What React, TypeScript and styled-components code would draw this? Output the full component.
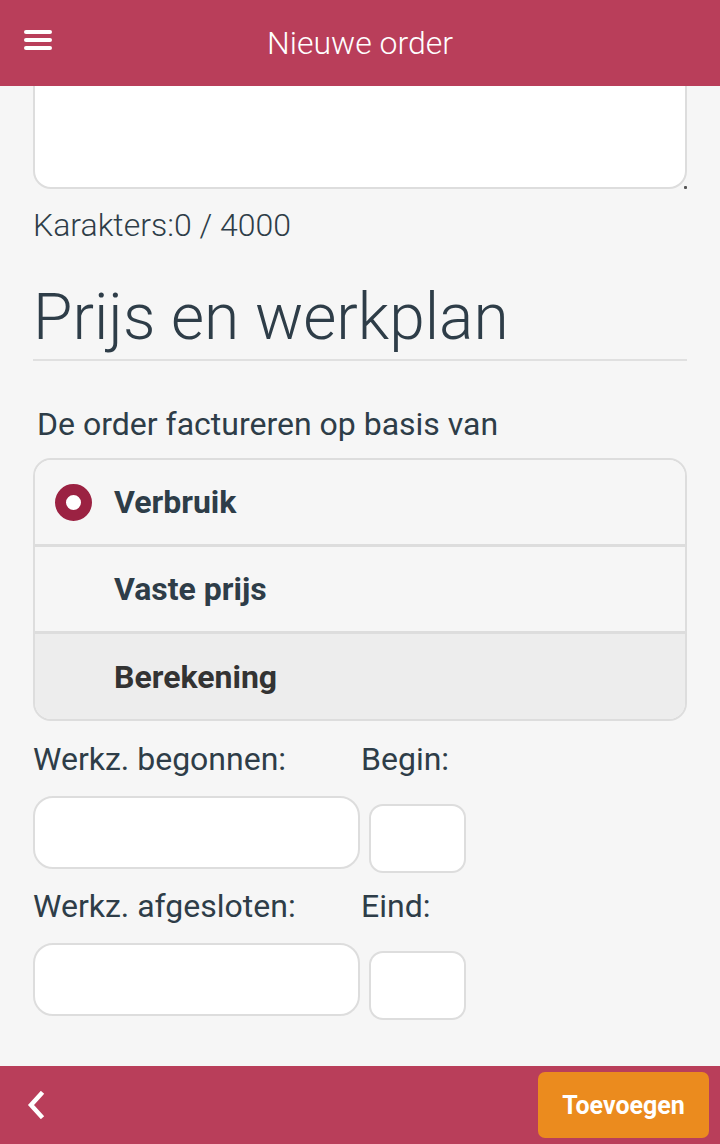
import styled, { createGlobalStyle } from "styled-components";

const GlobalStyle = createGlobalStyle`
  html, body {
    margin: 0;
    padding: 0;
    background: #f6f6f6;
    font-family: Roboto, "Liberation Sans", sans-serif;
  }
  * { box-sizing: border-box; }
`;

const options = [
  { label: "Verbruik", checked: true },
  { label: "Vaste prijs", checked: false },
  { label: "Berekening", checked: false, shaded: true },
];

const timeFields = [
  { date: "Werkz. begonnen:", time: "Begin:" },
  { date: "Werkz. afgesloten:", time: "Eind:" },
];

export default function App() {
  return (
    <Page>
      <GlobalStyle />
      <Header>
        <MenuButton aria-label="menu">
          <svg width="28" height="20" viewBox="0 0 28 20">
            <rect x="0" y="0" width="28" height="4" rx="2" fill="#fff" />
            <rect x="0" y="8" width="28" height="4" rx="2" fill="#fff" />
            <rect x="0" y="16" width="28" height="4" rx="2" fill="#fff" />
          </svg>
        </MenuButton>
        <Title>Nieuwe order</Title>
      </Header>

      <Main>
        <TextArea>
          <ResizeGrip />
        </TextArea>
        <Counter>Karakters:0 / 4000</Counter>

        <SectionTitle>Prijs en werkplan</SectionTitle>

        <Question>De order factureren op basis van</Question>
        <RadioGroup>
          {options.map((o) => (
            <RadioRow key={o.label} $shaded={o.shaded}>
              <RadioSlot>{o.checked && <RadioDot />}</RadioSlot>
              <RadioLabel $dark={o.shaded}>{o.label}</RadioLabel>
            </RadioRow>
          ))}
        </RadioGroup>

        {timeFields.map((f) => (
          <FieldBlock key={f.date}>
            <LabelRow>
              <DateLabel>{f.date}</DateLabel>
              <FieldLabel>{f.time}</FieldLabel>
            </LabelRow>
            <InputRow>
              <DateInput />
              <TimeInput />
            </InputRow>
          </FieldBlock>
        ))}
      </Main>

      <Footer>
        <BackButton aria-label="terug">
          <svg width="20" height="28" viewBox="0 0 20 28">
            <path
              d="M15 3 L5 14 L15 25"
              stroke="#fff"
              strokeWidth="4.5"
              fill="none"
              strokeLinecap="square"
              strokeLinejoin="miter"
            />
          </svg>
        </BackButton>
        <AddButton>Toevoegen</AddButton>
      </Footer>
    </Page>
  );
}

const Page = styled.div`
  display: flex;
  flex-direction: column;
  height: 100vh;
  overflow: hidden;
  background: #f6f6f6;
  color: #2e3d48;
`;

const Header = styled.header`
  flex: none;
  height: 86px;
  background: #b93e5a;
  display: flex;
  align-items: center;
  justify-content: center;
  position: relative;
  z-index: 1;
`;

const MenuButton = styled.div`
  position: absolute;
  left: 24px;
  top: 30px;
  display: flex;
`;

const Title = styled.h1`
  margin: 0;
  color: #fff;
  font-size: 32px;
  font-weight: 300;
`;

const Main = styled.main`
  flex: 1;
  overflow: hidden;
  padding: 0 33px;
  display: flex;
  flex-direction: column;
`;

const TextArea = styled.div`
  flex: none;
  position: relative;
  margin-top: -20px;
  height: 123px;
  background: #fff;
  border: 2px solid #dddddd;
  border-radius: 18px;
`;

const ResizeGrip = styled.div`
  position: absolute;
  right: -2px;
  bottom: -2px;
  width: 3px;
  height: 3px;
  background: #555;
  border-radius: 1px;
`;

const Counter = styled.div`
  margin-top: 17px;
  font-size: 32px;
  font-weight: 300;
  line-height: 38px;
`;

const SectionTitle = styled.h2`
  margin: 37px 0 0;
  padding-bottom: 4px;
  font-size: 64px;
  font-weight: 300;
  line-height: 74px;
  border-bottom: 2px solid #e0e0e0;
`;

const Question = styled.div`
  margin: 44px 0 0 4px;
  font-size: 32px;
  line-height: 38px;
`;

const RadioGroup = styled.div`
  margin-top: 15px;
  border: 2px solid #dddddd;
  border-radius: 18px;
  overflow: hidden;
  background: #f6f6f6;
`;

const RadioRow = styled.div<{ $shaded?: boolean }>`
  height: 84px;
  display: flex;
  align-items: center;
  background: ${(p) => (p.$shaded ? "#ededed" : "#f6f6f6")};
  & + & {
    height: 87px;
    border-top: 3px solid #dddddd;
  }
  &:last-child {
    height: 88px;
  }
`;

const RadioSlot = styled.div`
  width: 79px;
  padding-left: 20px;
  display: flex;
  align-items: center;
`;

const RadioDot = styled.div`
  width: 37px;
  height: 37px;
  border-radius: 50%;
  border: 11px solid #9b2242;
  background: #fff;
`;

const RadioLabel = styled.span<{ $dark?: boolean }>`
  font-size: 32px;
  font-weight: 700;
  color: ${(p) => (p.$dark ? "#333333" : "#2e3d48")};
`;

const FieldBlock = styled.div`
  display: flex;
  flex-direction: column;
  margin-top: 19px;
  & + & {
    margin-top: 14px;
  }
`;

const LabelRow = styled.div`
  display: flex;
  font-size: 32px;
  line-height: 38px;
`;

const DateLabel = styled.div`
  width: 328px;
`;

const FieldLabel = styled.div``;

const InputRow = styled.div`
  display: flex;
  align-items: flex-start;
  gap: 9px;
  margin-top: 18px;
`;

const DateInput = styled.div`
  width: 327px;
  height: 73px;
  background: #fff;
  border: 2px solid #dddddd;
  border-radius: 20px;
`;

const TimeInput = styled.div`
  margin-top: 8px;
  width: 97px;
  height: 69px;
  background: #fff;
  border: 2px solid #dddddd;
  border-radius: 14px;
`;

const Footer = styled.footer`
  flex: none;
  height: 78px;
  background: #b93e5a;
  display: flex;
  align-items: center;
  justify-content: space-between;
  padding: 0 11px 0 26px;
`;

const BackButton = styled.div`
  display: flex;
`;

const AddButton = styled.button`
  height: 66px;
  width: 171px;
  border: none;
  border-radius: 7px;
  background: #eb8b1e;
  color: #fff;
  font-family: Roboto, "Liberation Sans", sans-serif;
  font-size: 25px;
  font-weight: 700;
`;
